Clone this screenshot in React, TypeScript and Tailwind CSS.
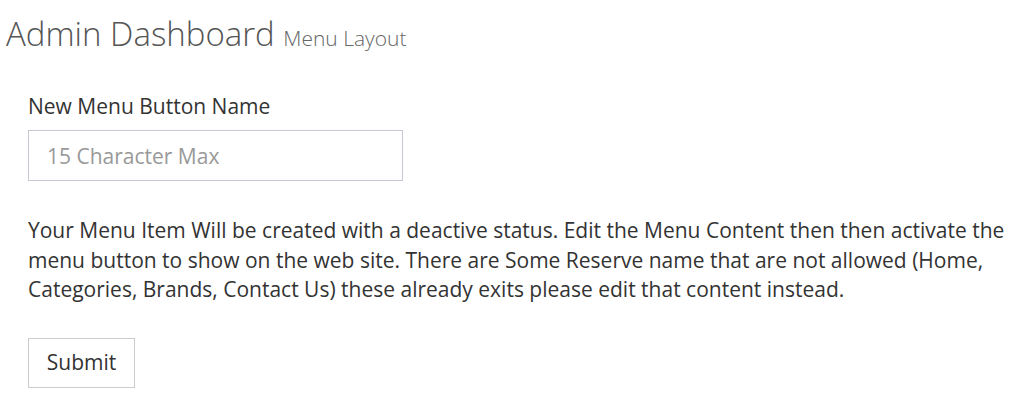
export default function App() {
  return (
    <div className="min-h-[409px] bg-white text-[#333]" style={{ fontFamily: '"Open Sans", sans-serif' }}>
      <h1 className="pl-[6px] pt-[8px] text-[33px] font-light leading-[52px] text-[#555]">
        Admin Dashboard <span className="text-[21px] text-[#666]">Menu Layout</span>
      </h1>
      <form className="flex flex-col pl-[28px] pr-[10px] pt-[27px]" onSubmit={(e) => e.preventDefault()}>
        <label className="mb-[9px] text-[21px] leading-[30px]">New Menu Button Name</label>
        <input
          type="text"
          maxLength={15}
          placeholder="15 Character Max"
          className="h-[51px] w-[375px] border border-[#c4c9d4] px-[18px] text-[21px] outline-none placeholder:text-[#999]"
        />
        <p className="mt-[35px] text-[21px] leading-[29.5px]">
          Your Menu Item Will be created with a deactive status. Edit the Menu Content then then activate the menu
          button to show on the web site. There are Some Reserve name that are not allowed (Home, Categories, Brands,
          Contact Us) these already exits please edit that content instead.
        </p>
        <div className="mt-[33px]">
          <button type="submit" className="h-[50px] w-[107px] border border-[#ccc] text-[21px] text-[#333]">
            Submit
          </button>
        </div>
      </form>
    </div>
  );
}
